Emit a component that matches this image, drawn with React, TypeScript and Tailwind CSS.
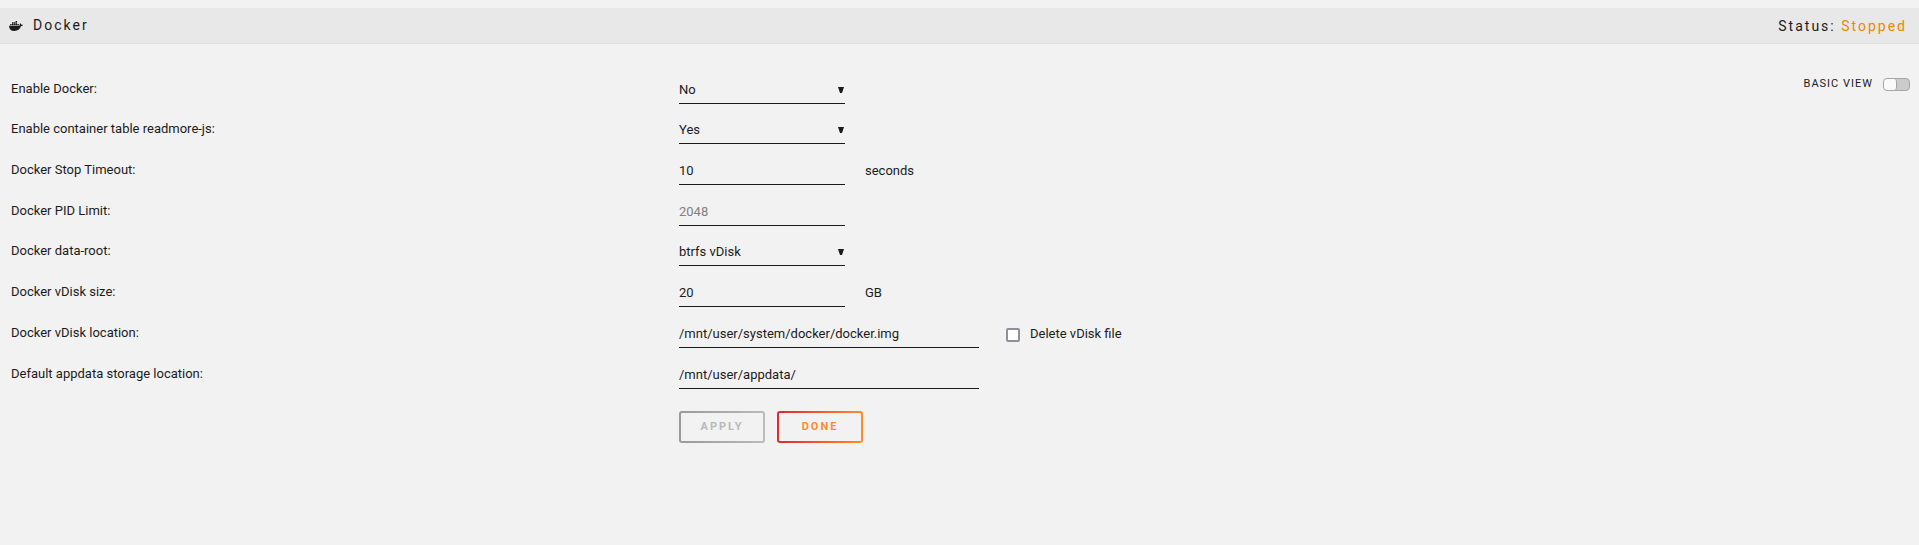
import { useState, type ReactNode } from "react";

const fieldClass =
  "h-[26px] appearance-none rounded-none border-b border-[#1c1b1b] bg-transparent p-0 pb-0.5 text-[13px] leading-5 text-[#1c1b1b] outline-none placeholder:text-[#808080]";

function WhaleIcon() {
  return (
    <svg viewBox="0 0 28 20" className="h-2.5 w-3.5" fill="#1c1b1b" aria-hidden="true">
      <path d="M0 9.5h20.6c1-.5 1.3-1.6 1-3 .2-1 .6-1.7 1.2-2 1.4.8 2 1.900 2 3 1.200-.3 2.400-.1 3.200.4-.6 1.500-1.900 2.300-3.800 2.300C22 16.500 17.500 20 10.800 20 4 20 .2 16.500 0 9.500z" />
      <path d="M2.400 6h3v2.700h-3zM6 6h3v2.700H6zM9.600 6h3v2.700h-3zM13.200 6h3v2.700h-3zM6 2.700h3v2.700H6zM9.600 2.700h3v2.700h-3zM13.200 2.700h3v2.700h-3zM13.200 0h3v2.100h-3zM16.800 6h3v2.700h-3z" />
    </svg>
  );
}

function Row({ id, label, children }: { id: string; label: string; children: ReactNode }) {
  return (
    <div className="flex items-end gap-[3px]">
      <label htmlFor={id} className="w-[35%] shrink-0 pb-[5px] leading-5">
        {label}
      </label>
      <div className="flex items-end">{children}</div>
    </div>
  );
}

function SelectRow({ id, label, options }: { id: string; label: string; options: string[] }) {
  return (
    <div className="pt-[14px]">
      <Row id={id} label={label}>
        <div className="relative">
          <select id={id} className={`${fieldClass} block w-[166px]`}>
            {options.map((option) => (
              <option key={option}>{option}</option>
            ))}
          </select>
          <svg viewBox="0 0 6 6" className="pointer-events-none absolute top-[9px] right-px size-1.5" fill="#1c1b1b" aria-hidden="true">
            <path d="M0 0h6L4 6H2z" />
          </svg>
        </div>
      </Row>
    </div>
  );
}

type InputRowProps = {
  id: string;
  label: string;
  value?: string;
  placeholder?: string;
  unit?: string;
  wide?: boolean;
  children?: ReactNode;
};

function InputRow({ id, label, value, placeholder, unit, wide, children }: InputRowProps) {
  return (
    <div className="pt-[15px]">
      <Row id={id} label={label}>
        <input
          id={id}
          type="text"
          defaultValue={value}
          placeholder={placeholder}
          className={`${fieldClass} ${wide ? "w-[300px]" : "w-[166px]"}`}
        />
        {unit && <span className="ml-5 pb-1 leading-5">{unit}</span>}
        {children}
      </Row>
    </div>
  );
}

export default function App() {
  const [advanced, setAdvanced] = useState(false);

  return (
    <div className="min-h-screen bg-[#f2f2f2] pt-2 font-['Roboto','Liberation_Sans',sans-serif] text-[13px] text-[#1c1b1b]">
      <header className="flex h-9 items-center justify-between border-b border-[#dfdfdf] bg-[#e8e8e8] pr-3 pl-[9px] text-[14px] tracking-[2px]">
        <h1 className="flex items-center gap-2.5">
          <WhaleIcon />
          Docker
        </h1>
        <p className="pt-px">
          Status: <span className="text-[#e68a00]">Stopped</span>
        </p>
      </header>

      <main className="flex items-start pr-2 pl-[11px] pt-5">
        <form className="min-w-0 flex-1" onSubmit={(event) => event.preventDefault()}>
          <SelectRow id="enable" label="Enable Docker:" options={["No", "Yes"]} />
          <SelectRow id="readmore" label="Enable container table readmore-js:" options={["Yes", "No"]} />
          <InputRow id="timeout" label="Docker Stop Timeout:" value="10" unit="seconds" />
          <InputRow id="pid" label="Docker PID Limit:" placeholder="2048" />
          <SelectRow id="root" label="Docker data-root:" options={["btrfs vDisk", "xfs vDisk", "directory"]} />
          <InputRow id="size" label="Docker vDisk size:" value="20" unit="GB" />
          <InputRow id="location" label="Docker vDisk location:" value="/mnt/user/system/docker/docker.img" wide>
            <label className="ml-[27px] flex items-center gap-2.5 pb-1 leading-5">
              <input
                type="checkbox"
                className="mt-px size-[14px] appearance-none rounded-[2px] border-2 border-[#8f8f9d] bg-white checked:bg-[#8f8f9d]"
              />
              Delete vDisk file
            </label>
          </InputRow>
          <InputRow id="appdata" label="Default appdata storage location:" value="/mnt/user/appdata/" wide />

          <div className="flex gap-[3px] pt-[22px]">
            <div className="w-[35%] shrink-0" />
            <div className="flex gap-3 text-[11px] font-bold tracking-[2px]">
              <button
                type="submit"
                disabled
                className="h-8 w-[86px] rounded-[3px] border-2 border-transparent pt-px text-[#b9b9b9] [background:linear-gradient(#f2f2f2,#f2f2f2)_padding-box,linear-gradient(90deg,#999,#bbb)_border-box]"
              >
                APPLY
              </button>
              <button
                type="button"
                className="h-8 w-[86px] rounded-[3px] border-2 border-transparent pt-px text-[#ff8c2f] [background:linear-gradient(#f2f2f2,#f2f2f2)_padding-box,linear-gradient(90deg,#e22828,#ff8c2f)_border-box]"
              >
                DONE
              </button>
            </div>
          </div>
        </form>

        <div className="-ml-[120px] flex w-[120px] items-center justify-end gap-2.5 pt-3 pr-px text-[11px] leading-4 tracking-[1px]">
          <span id="view-label">BASIC VIEW</span>
          <button
            type="button"
            role="switch"
            aria-checked={advanced}
            aria-labelledby="view-label"
            onClick={() => setAdvanced(!advanced)}
            className={`flex h-[13px] w-[27px] overflow-hidden rounded-[4px] border border-[#a6a6a6] bg-[#cbcbcb] ${advanced ? "justify-end" : "justify-start"}`}
          >
            <span className="h-full w-[13px] rounded-[3px] border-r border-[#a6a6a6] bg-[#fafafa]" />
          </button>
        </div>
      </main>
    </div>
  );
}
